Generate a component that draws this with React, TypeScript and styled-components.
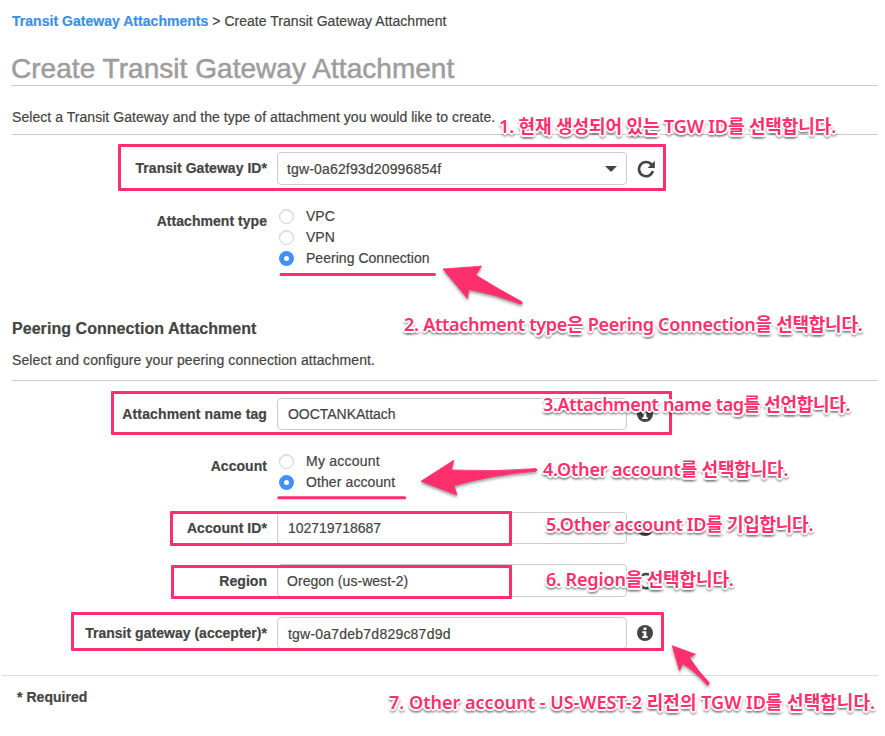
import React from "react";
import styled, { createGlobalStyle } from "styled-components";

const PINK = "#ff2f6e";

const Global = createGlobalStyle`
  body {
    margin: 0;
    background: #fff;
    overflow: hidden;
  }
`;

const Page = styled.div`
  position: relative;
  box-sizing: border-box;
  width: 885px;
  height: 736px;
  padding: 11px 7px 0 0;
  overflow: hidden;
  background: #fff;
  color: #444;
  font: 14px/20px "Liberation Sans", Arial, sans-serif;
  letter-spacing: 0.04px;
  white-space: nowrap;
  -webkit-text-stroke: 0.2px;
`;

const Breadcrumb = styled.nav`
  padding-left: 12px;
  height: 20px;
  letter-spacing: 0.03px;
`;

const Crumb = styled.a`
  color: #3c8fe8;
  font-weight: 700;
  text-decoration: none;
`;

const Title = styled.h1`
  margin: 0 0 0 11px;
  padding-top: 22px;
  border-bottom: 1px solid #ccc;
  color: #9d9d9d;
  font-size: 28px;
  font-weight: 400;
  line-height: 32px;
  letter-spacing: 0.04px;
  -webkit-text-stroke: 0.5px #9d9d9d;
`;

const Intro = styled.p<{ $top: number; $bottom: number; $spacing: number }>`
  margin: 0 0 0 12px;
  padding: ${(p) => p.$top}px 0 ${(p) => p.$bottom}px;
  border-bottom: 1px solid #ccc;
  letter-spacing: ${(p) => p.$spacing}px;
`;

const Heading = styled.h2`
  margin: 51px 0 0 12px;
  font-size: 16px;
  line-height: 20px;
  letter-spacing: 0.05px;
`;

const Row = styled.div<{ $gap: number }>`
  display: grid;
  grid-template-columns: 267px 350px 18px;
  column-gap: 10px;
  align-items: center;
  margin-top: ${(p) => p.$gap}px;
`;

const Label = styled.label<{ $spacing?: number; $lift?: number }>`
  padding-bottom: ${(p) => p.$lift ?? 0}px;
  font-weight: 700;
  text-align: right;
  letter-spacing: ${(p) => p.$spacing ?? 0.04}px;
`;

const GroupLabel = styled(Label)`
  align-self: start;
  padding-top: 6px;
`;

const Field = styled.div<{ $height: number; $inset?: number; $spacing?: number; $drop?: number }>`
  box-sizing: border-box;
  display: flex;
  align-items: center;
  justify-content: space-between;
  height: ${(p) => p.$height}px;
  padding: ${(p) => p.$drop ?? 0}px 9px 0 ${(p) => p.$inset ?? 10}px;
  border: 1px solid #ccc;
  border-radius: 4px;
  background: #fff;
  letter-spacing: ${(p) => p.$spacing ?? 0.04}px;
`;

const Caret = styled.span`
  border: 6px solid transparent;
  border-top-color: #444;
  border-bottom: 0;
`;

const Options = styled.div`
  display: flex;
  flex-direction: column;
`;

const Option = styled.div<{ $spacing?: number }>`
  display: flex;
  align-items: center;
  gap: 12px;
  height: 21px;
  padding-left: 2px;
  letter-spacing: ${(p) => p.$spacing ?? 0.03}px;
`;

const Dot = styled.span<{ $on?: boolean }>`
  box-sizing: border-box;
  width: 15px;
  height: 15px;
  margin-top: 1px;
  border: ${(p) => (p.$on ? "5.5px solid #4490fb" : "1.5px solid #d0d0d0")};
  border-radius: 50%;
  background: #fff;
  box-shadow: ${(p) => (p.$on ? "none" : "inset 0 1px 1px #e4e4e4")};
`;

const IconSlot = styled.span`
  display: flex;
  color: #444;
`;

const Footer = styled.footer`
  margin: 26px 0 0 2px;
  padding: 11px 0 0 15px;
  border-top: 1px solid #ddd;
  font-weight: 700;
`;

const Frame = styled.div<{ $x: number; $y: number; $w: number; $h: number }>`
  position: absolute;
  box-sizing: border-box;
  left: ${(p) => p.$x}px;
  top: ${(p) => p.$y}px;
  width: ${(p) => p.$w}px;
  height: ${(p) => p.$h}px;
  border: 3px solid ${PINK};
  border-radius: 1px;
`;

const Underlines = styled.svg`
  position: absolute;
  left: 0;
  top: 0;
`;

const Arrows = styled(Underlines)`
  filter: drop-shadow(0 2px 1.5px rgba(0, 0, 0, 0.4));
`;

const Note = styled.div<{ $x: number; $y: number; $spacing: number }>`
  position: absolute;
  left: ${(p) => p.$x}px;
  top: ${(p) => p.$y}px;
  color: ${PINK};
  font: 600 18px/24px "Noto Sans", "Noto Sans CJK KR", sans-serif;
  letter-spacing: ${(p) => p.$spacing}px;
  -webkit-text-stroke: 0;
  text-shadow:
    2px 0 0 #fff, -2px 0 0 #fff, 0 2px 0 #fff, 0 -2px 0 #fff,
    1.4px 1.4px 0 #fff, -1.4px 1.4px 0 #fff, 1.4px -1.4px 0 #fff, -1.4px -1.4px 0 #fff,
    2px 3px 2px rgba(0, 0, 0, 0.25), -2px 3px 2px rgba(0, 0, 0, 0.25), 0 4px 2px rgba(0, 0, 0, 0.3);
`;

const Info = () => (
  <IconSlot>
    <svg width="16" height="16" viewBox="0 0 16 16">
      <circle cx="8" cy="8" r="8" fill="#444" />
      <path
        d="M6.6 2.6h2.8v2.3H6.6zM5.2 6.3h4.2v4.9h1.3v1.7H5.2v-1.7h1.4V8H5.2z"
        fill="#fff"
      />
    </svg>
  </IconSlot>
);

const Refresh = () => (
  <IconSlot>
    <svg width="18" height="18" viewBox="0 0 18 18">
      <path d="M14.6 4.6A7.1 7.1 0 1 0 15.9 11.2" fill="none" stroke="#444" strokeWidth="2.7" />
      <path d="M17.8 0.8v7.2h-7.2z" fill="#444" />
    </svg>
  </IconSlot>
);

const frames = [
  { x: 118, y: 144, w: 548, h: 47 },
  { x: 111, y: 391, w: 561, h: 44 },
  { x: 170, y: 511, w: 342, h: 35 },
  { x: 171, y: 565, w: 341, h: 34 },
  { x: 71, y: 612, w: 593, h: 39 },
];

const notes = [
  { x: 499, y: 114, s: -0.11, text: "1. 현재 생성되어 있는 TGW ID를 선택합니다." },
  { x: 404, y: 312, s: -0.27, text: "2. Attachment type은 Peering Connection을 선택합니다." },
  { x: 543, y: 392, s: -0.34, text: "3.Attachment name tag를 선언합니다." },
  { x: 543, y: 457, s: -0.18, text: "4.Other account를 선택합니다." },
  { x: 546, y: 512, s: -0.26, text: "5.Other account ID를 기입합니다." },
  { x: 546, y: 567, s: -0.14, text: "6. Region을 선택합니다." },
  { x: 389, y: 690, s: 0.01, text: "7. Other account - US-WEST-2 리전의 TGW ID를 선택합니다." },
];

export default function App() {
  return (
    <Page>
      <Global />
      <Breadcrumb>
        <Crumb>Transit Gateway Attachments</Crumb> &gt; Create Transit Gateway Attachment
      </Breadcrumb>
      <Title>Create Transit Gateway Attachment</Title>
      <Intro $top={21} $bottom={7} $spacing={0.05}>
        Select a Transit Gateway and the type of attachment you would like to create.
      </Intro>

      <Row $gap={17}>
        <Label $lift={1}>Transit Gateway ID*</Label>
        <Field $height={33} $inset={9} $spacing={0.16} $drop={1}>
          tgw-0a62f93d20996854f
          <Caret />
        </Field>
        <Refresh />
      </Row>
      <Row $gap={20}>
        <GroupLabel>Attachment type</GroupLabel>
        <Options>
          <Option><Dot />VPC</Option>
          <Option><Dot />VPN</Option>
          <Option><Dot $on />Peering Connection</Option>
        </Options>
      </Row>

      <Heading>Peering Connection Attachment</Heading>
      <Intro $top={11} $bottom={10} $spacing={0.09}>
        Select and configure your peering connection attachment.
      </Intro>

      <Row $gap={17}>
        <Label $spacing={0.12}>Attachment name tag</Label>
        <Field $height={32} $spacing={-0.03}>OOCTANKAttach</Field>
        <Info />
      </Row>
      <Row $gap={20}>
        <GroupLabel>Account</GroupLabel>
        <Options>
          <Option $spacing={0.22}><Dot />My account</Option>
          <Option $spacing={0.1}><Dot $on />Other account</Option>
        </Options>
      </Row>
      <Row $gap={20}>
        <Label $spacing={0.07}>Account ID*</Label>
        <Field $height={32} $spacing={-0.03}>102719718687</Field>
        <Info />
      </Row>
      <Row $gap={20}>
        <Label>Region</Label>
        <Field $height={33} $inset={9} $drop={1}>Oregon (us-west-2)</Field>
        <Refresh />
      </Row>
      <Row $gap={20}>
        <Label $spacing={0.02}>Transit gateway (accepter)*</Label>
        <Field $height={32} $spacing={0.22} $drop={1}>tgw-0a7deb7d829c87d9d</Field>
        <Info />
      </Row>
      <Footer>* Required</Footer>

      {frames.map((f) => (
        <Frame key={f.y} $x={f.x} $y={f.y} $w={f.w} $h={f.h} />
      ))}
      <Underlines width="885" height="736" stroke={PINK} strokeWidth="3" strokeLinecap="round">
        <path d="M281 274.5H434.5M278.7 497.7H404.7" />
      </Underlines>
      <Arrows width="885" height="736" fill={PINK} stroke={PINK} strokeWidth="0.8" strokeLinejoin="round">
        <path d="M443 269L481.5 266.2L475.7 275Q498 289 521.6 301.6Q523.4 303.6 521 304.2Q495 294 468.7 289.4L467.6 298.6Z" />
        <path d="M421 481.3L453.8 460.3L451.3 470Q494 472 536 468.6Q538.2 469.8 536 471.2Q492 474.5 454 485.7L457 495Z" />
        <path d="M672.3 645.8L695.5 654.3L689.3 657.6Q698 671 709 682.4Q709.8 685 707.2 685Q696 672 682.7 663.6L679.6 670.6Z" />
      </Arrows>
      {notes.map((n) => (
        <Note key={n.text} $x={n.x} $y={n.y} $spacing={n.s}>{n.text}</Note>
      ))}
    </Page>
  );
}
